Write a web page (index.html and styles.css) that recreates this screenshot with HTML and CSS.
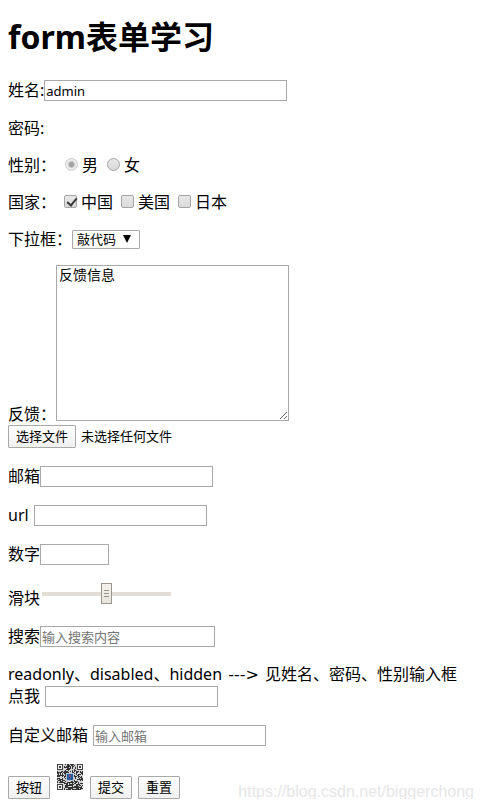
FILE: index.html
```
<!DOCTYPE html>
<html lang="zh-CN">
<head>
    <meta charset="UTF-8">
    <meta name="viewport" content="width=device-width, initial-scale=1.0">
    <title>form表单学习</title>
    <link rel="stylesheet" href="styles.css">
</head>
<body>
    <h1>form表单学习</h1>
    <form action="#" method="get">
        <p class="row field">
            <label for="username">姓名:</label>
            <input class="text text-wide" type="text" id="username" name="username" value="admin" readonly>
        </p>
        <!-- 隐藏域 -->
        <p class="row">
            <label for="pwd">密码:</label>
            <input type="password" id="pwd" name="pwd" hidden>
        </p>
        <!-- 单选框 -->
        <p class="row options">
            <span>性别：</span>
            <label><input class="radio" type="radio" name="sex" value="1" checked disabled>男</label>
            <label><input class="radio" type="radio" name="sex" value="0">女</label>
        </p>
        <!-- 多选框 -->
        <p class="row options">
            <span>国家：</span>
            <label><input class="checkbox" type="checkbox" name="country" value="cn" checked>中国</label>
            <label><input class="checkbox" type="checkbox" name="country" value="us">美国</label>
            <label><input class="checkbox" type="checkbox" name="country" value="jp">日本</label>
        </p>
        <!-- 下拉框 -->
        <p class="row select-row">
            <label for="hobby">下拉框：</label>
            <span class="select-box">
                <select id="hobby" name="hobby">
                    <option>敲代码</option>
                </select>
            </span>
        </p>
        <!-- 文本域 -->
        <p class="row feedback">
            <label for="feedback">反馈：</label>
            <textarea id="feedback" name="feedback">反馈信息</textarea>
        </p>
        <!-- 文件域 -->
        <div class="row file">
            <label class="btn" for="file">选择文件</label>
            <span>未选择任何文件</span>
            <input type="file" id="file" name="file">
        </div>
        <p class="row field">
            <label for="email">邮箱</label>
            <input class="text" type="email" id="email" name="email">
        </p>
        <p class="row field spaced">
            <label for="url">url</label>
            <input class="text" type="url" id="url" name="url">
        </p>
        <p class="row field">
            <label for="num">数字</label>
            <input class="text text-number" type="number" id="num" name="num">
        </p>
        <p class="row slider">
            <label for="voice">滑块</label>
            <input type="range" id="voice" name="voice" min="0" max="100" value="50">
        </p>
        <p class="row field">
            <label for="search">搜索</label>
            <input class="text text-search" type="search" id="search" name="search" placeholder="输入搜索内容">
        </p>
        <p class="note">readonly、disabled、hidden <span class="arrow">---&gt;</span> 见姓名、密码、性别输入框</p>
        <div class="row field spaced mark">
            <label for="mark">点我</label>
            <input class="text" type="text" id="mark">
        </div>
        <p class="row field spaced">
            <label for="diymail">自定义邮箱</label>
            <input class="text" type="text" id="diymail" name="diymail" placeholder="输入邮箱">
        </p>
        <p class="row buttons">
            <button class="btn" type="button">按钮</button>
            <button class="image-btn" type="submit" aria-label="二维码">
                <svg width="28" height="28" viewBox="0 0 28 28" xmlns="http://www.w3.org/2000/svg">
                    <rect x="1" y="1" width="26" height="26" fill="#d4d4d4"></rect>
                    <path id="modules" fill="#333" transform="translate(1 1)"></path>
                    <g fill="#eee" stroke="#444">
                        <rect x="1.5" y="1.5" width="5" height="5"></rect>
                        <rect x="21.5" y="1.5" width="5" height="5"></rect>
                        <rect x="1.5" y="21.5" width="5" height="5"></rect>
                    </g>
                    <g fill="#444">
                        <rect x="3" y="3" width="2" height="2"></rect>
                        <rect x="23" y="3" width="2" height="2"></rect>
                        <rect x="3" y="23" width="2" height="2"></rect>
                    </g>
                    <rect x="10" y="10" width="8" height="8" rx="1" fill="#b9c6d8"></rect>
                    <rect x="11" y="11" width="6" height="6" fill="#2b5b9b"></rect>
                    <rect x="13" y="12" width="2" height="2" fill="#8b4a68"></rect>
                </svg>
            </button>
            <button class="btn" type="submit">提交</button>
            <button class="btn" type="reset">重置</button>
            <span class="watermark">https://blog.csdn.net/biggerchong</span>
        </p>
    </form>
    <script>
        // 生成二维码的小方块，定位块的位置留空
        var seed = 7
        var d = ''
        for (var y = 0; y < 26; y++) {
            for (var x = 0; x < 26; x++) {
                seed = (seed * 1103515245 + 12345) % 2147483648
                var corner = (x < 7 && y < 7) || (x > 18 && y < 7) || (x < 7 && y > 18)
                if (!corner && seed / 2147483648 < 0.56) {
                    d += 'M' + x + ' ' + y + 'h1v1h-1z'
                }
            }
        }
        document.getElementById('modules').setAttribute('d', d)
    </script>
</body>
</html>
```
FILE: styles.css
```
*{
    box-sizing: border-box;
}
body{
    margin: 16px 8px 8px;
    background-color: #fff;
    color: #000;
    font-family: "Noto Sans", "Noto Sans CJK SC", sans-serif;
    font-size: 16px;
    line-height: 21px;
}
h1{
    margin: 0 0 22px;
    font-size: 32px;
    line-height: 41px;
}
p{
    margin: 0 0 16px;
}
input, select, textarea, button{
    margin: 0;
    font-family: inherit;
    font-size: 13px;
    color: #000;
}
.row{
    display: flex;
    align-items: center;
}
.field{
    min-height: 23px;
}
.spaced{
    gap: 5px;
}
.text{
    width: 173px;
    height: 21px;
    padding: 1px;
    border: 1px solid #a9a9a9;
    background-color: #fff;
    outline: none;
}
.text-wide{
    width: 243px;
}
.text-number{
    width: 69px;
}
.text-search{
    width: 175px;
    appearance: none;
}
.text::placeholder{
    color: #757575;
}

/* 单选框和多选框 */
.options{
    gap: 4px;
}
.options label{
    display: flex;
    align-items: center;
}
.radio, .checkbox{
    appearance: none;
    width: 13px;
    height: 13px;
    margin: 0 4px 2px 5px;
    border: 1px solid #a5a5a5;
    background: linear-gradient(#e8e8e8, #d9d9d9);
}
.radio{
    border-radius: 50%;
}
.radio:disabled{
    border-color: #cdcdcd;
    background: radial-gradient(circle, #a3a3a3 2px, #ececec 4px);
}
.checkbox{
    position: relative;
    margin-left: 4px;
    border-radius: 2px;
}
.checkbox:checked::after{
    content: "";
    position: absolute;
    left: 4px;
    top: 0;
    width: 4px;
    height: 8px;
    border: solid #3c3c3c;
    border-width: 0 2px 2px 0;
    transform: rotate(40deg);
}

/* 下拉框 */
.select-row{
    height: 20px;
}
.select-box{
    position: relative;
    display: flex;
}
.select-box::after{
    content: "";
    position: absolute;
    right: 9px;
    top: 5px;
    border: 4px solid transparent;
    border-top: 8px solid #000;
    border-bottom: none;
    pointer-events: none;
}
select{
    appearance: none;
    width: 68px;
    height: 19px;
    padding: 0 4px;
    border: 1px solid #a9a9a9;
    border-radius: 1px;
    background-color: #fff;
    line-height: 17px;
}

/* 文本域 */
.feedback{
    align-items: flex-start;
    min-height: 160px;
    margin: 0;
}
.feedback label{
    align-self: flex-end;
}
textarea{
    width: 233px;
    height: 156px;
    padding: 1px 2px;
    border: 1px solid #a9a9a9;
    font-size: 14px;
    line-height: 16px;
    outline: none;
}

/* 文件域 */
.file{
    position: relative;
    align-items: flex-start;
    gap: 5px;
    min-height: 24px;
    margin-bottom: 16px;
    font-size: 13px;
    line-height: 23px;
}
.file input{
    position: absolute;
    left: 0;
    top: 0;
    width: 173px;
    height: 23px;
    opacity: 0;
}
.btn{
    height: 23px;
    padding: 0 7px;
    border: 1px solid #a9a9a9;
    border-radius: 1px;
    background: linear-gradient(#fff, #f0f0f0);
    line-height: 21px;
}

/* 滑块 */
.slider{
    align-items: flex-start;
    min-height: 27px;
}
.slider label{
    align-self: flex-end;
}
.slider input{
    appearance: none;
    width: 129px;
    height: 21px;
    margin: 1px 2px;
    background: linear-gradient(#e2ded6, #e2ded6) center / 100% 4px no-repeat;
}
.slider input::-webkit-slider-thumb{
    appearance: none;
    width: 11px;
    height: 21px;
    border: 1px solid #9b958b;
    background:
        linear-gradient(#9b958b, #9b958b) 2px 6px / 5px 1px no-repeat,
        linear-gradient(#9b958b, #9b958b) 2px 9px / 5px 1px no-repeat,
        linear-gradient(#9b958b, #9b958b) 2px 12px / 5px 1px no-repeat,
        linear-gradient(#f4f2ee, #e6e2dc);
}

.note{
    margin: 0;
}
.arrow{
    margin: 0 2px;
    font-family: "DejaVu Sans", sans-serif;
    line-height: 16px;
}
.mark{
    margin-bottom: 16px;
}

/* 按钮 */
.buttons{
    align-items: flex-end;
    gap: 6px;
    min-height: 36px;
    margin: 0;
}
.image-btn{
    align-self: flex-start;
    padding: 0;
    border: none;
    background: none;
    line-height: 0;
}
.watermark{
    margin-left: auto;
    color: #e6e6e6;
    font-family: "Liberation Sans", Arial, sans-serif;
    font-size: 16px;
    line-height: 14px;
}
```
